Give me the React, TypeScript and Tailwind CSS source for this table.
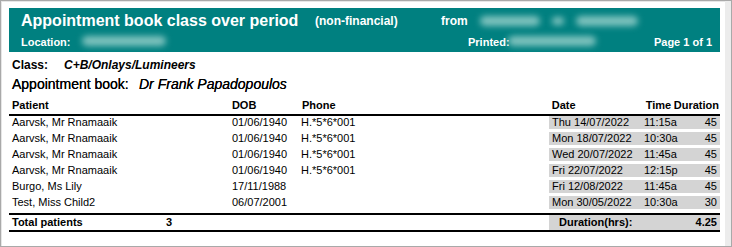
const rows = [
  { name: "Aarvsk, Mr Rnamaaik", dob: "01/06/1940", phone: "H.*5*6*001", date: "Thu 14/07/2022", time: "11:15a", dur: "45" },
  { name: "Aarvsk, Mr Rnamaaik", dob: "01/06/1940", phone: "H.*5*6*001", date: "Mon 18/07/2022", time: "10:30a", dur: "45" },
  { name: "Aarvsk, Mr Rnamaaik", dob: "01/06/1940", phone: "H.*5*6*001", date: "Wed 20/07/2022", time: "11:45a", dur: "45" },
  { name: "Aarvsk, Mr Rnamaaik", dob: "01/06/1940", phone: "H.*5*6*001", date: "Fri 22/07/2022", time: "12:15p", dur: "45" },
  { name: "Burgo, Ms Lily", dob: "17/11/1988", phone: "", date: "Fri 12/08/2022", time: "11:45a", dur: "45" },
  { name: "Test, Miss Child2", dob: "06/07/2001", phone: "", date: "Mon 30/05/2022", time: "10:30a", dur: "30" },
];

function Blur({ w, h = 8 }: { w: number; h?: number }) {
  return (
    <span
      className="inline-block rounded-full bg-[#7fc3be] blur-[3px]"
      style={{ width: w, height: h }}
    />
  );
}

export default function App() {
  return (
    <div className="flex h-[247px] w-[732px] border border-[#a9a9a9] bg-[#ececec] font-['Liberation_Sans',Arial,sans-serif] text-black">
      <div className="h-full w-[724px] border-t border-l border-[#e6e6e6] bg-white pl-[7px] pt-[6px]">
        {/* report header */}
        <div className="h-[44px] w-[711px] bg-[#008080] pl-3 pr-2 pt-[3px] text-white">
          <div className="flex h-[20px] items-start leading-[20px]">
            <span className="w-[294px] text-[16px] font-bold">Appointment book class over period</span>
            <span className="w-[126px] text-[12px] font-bold">(non-financial)</span>
            <span className="w-[39px] text-[12px] font-bold">from</span>
            <span className="flex items-center gap-[12px] pt-[5px]">
              <Blur w={60} h={10} />
              <Blur w={12} h={8} />
              <Blur w={62} h={10} />
            </span>
          </div>
          <div className="mt-1 flex h-[14px] items-center text-[11px] font-bold leading-[14px]">
            <span className="w-[61px]">Location:</span>
            <span className="w-[386px]">
              <Blur w={84} h={10} />
            </span>
            <span className="w-[40px]">Printed:</span>
            <span className="flex-1">
              <Blur w={88} h={10} />
            </span>
            <span>Page 1 of 1</span>
          </div>
        </div>

        {/* class & book */}
        <div className="mt-[5px] flex h-4 pl-[3px] text-[12px] font-bold leading-4">
          <span className="w-[52px]">Class:</span>
          <span className="italic">C+B/Onlays/Lumineers</span>
        </div>
        <div className="mt-[2px] flex h-[18px] pl-[3px] text-[14px] leading-[18px] [text-shadow:0_0_0.5px_#000]">
          <span className="w-[127px]">Appointment book:</span>
          <span className="italic">Dr Frank Papadopoulos</span>
        </div>

        {/* column headings */}
        <div className="mt-[5px] w-[711px] border-b-2 border-black pb-[2px]">
          <div className="flex h-[14px] text-[11px] font-bold leading-[14px]">
            <span className="w-[223px] pl-[3px]">Patient</span>
            <span className="w-[70px]">DOB</span>
            <span className="w-[247px]">Phone</span>
            <span className="w-[97px] pl-[3px]">Date</span>
            <span className="w-[28px]">Time</span>
            <span className="flex-1 pr-[1px] text-right">Duration</span>
          </div>
        </div>

        {/* data rows */}
        <div className="w-[711px] pb-[1px]">
          {rows.map((r, i) => (
            <div key={i} className="flex h-4 text-[11px] leading-[13px]">
              <span className="w-[223px] pl-[3px]">{r.name}</span>
              <span className="w-[69px]">{r.dob}</span>
              <span className="w-[248px]">{r.phone}</span>
              <div className="flex h-[13px] flex-1 bg-[#d4d4d4]">
                <span className="w-[95px] pl-[3px]">{r.date}</span>
                <span className="w-[40px]">{r.time}</span>
                <span className="flex-1 pr-[3px] text-right">{r.dur}</span>
              </div>
            </div>
          ))}
        </div>

        {/* totals */}
        <div className="flex h-[19px] w-[711px] border-y-2 border-black text-[11px] font-bold leading-[15px]">
          <span className="w-[157px] pl-[3px]">Total patients</span>
          <span className="w-[383px]">3</span>
          <div className="flex flex-1 bg-[#d4d4d4] pl-[10px] pr-[3px]">
            <span className="flex-1">Duration(hrs):</span>
            <span>4.25</span>
          </div>
        </div>
      </div>
    </div>
  );
}
